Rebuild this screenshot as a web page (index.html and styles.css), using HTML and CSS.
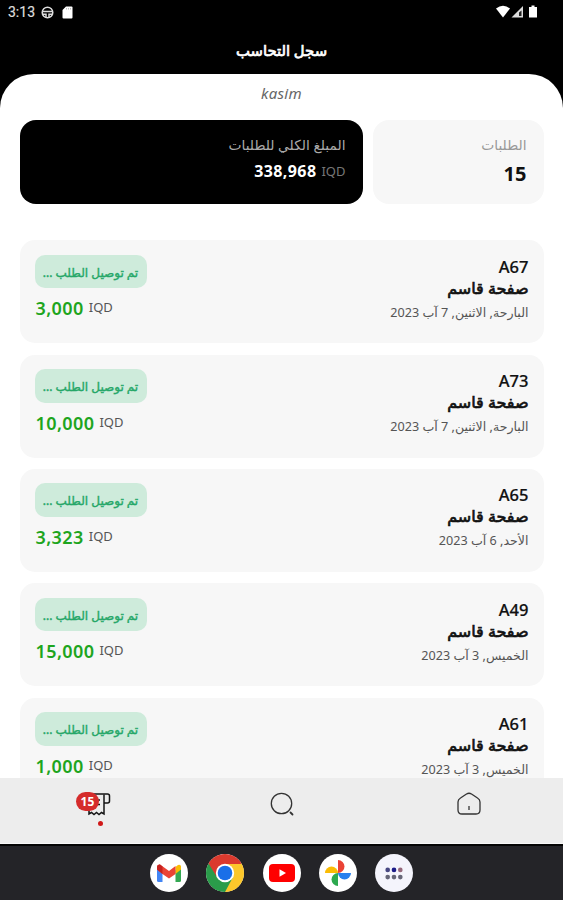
FILE: index.html
```html
<!DOCTYPE html>
<html lang="ar" dir="rtl">
<head>
  <meta charset="UTF-8" />
  <meta name="viewport" content="width=device-width, initial-scale=1.0"/>
  <title>سجل التحاسب</title>
  <link rel="stylesheet" href="styles.css">
</head>
<body>
  <div class="status" dir="ltr">
    <span class="clock">3:13</span>
    <svg width="13" height="13" viewBox="0 0 13 13" fill="none" stroke="#ddd" stroke-width="1.5">
      <circle cx="6.5" cy="6.5" r="5.3"/>
      <path d="M1.5 5.500h10M1.500 8.300h3.500v3M11.500 8.300H8v3"/>
    </svg>
    <svg class="sd" width="11" height="13" viewBox="0 0 11 13">
      <path d="M4 .5h5.5q1 0 1 1v10q0 1-1 1h-8q-1 0-1-1V4z" fill="#fff"/>
      <path d="M4.5 2v1.5M6.5 2v1.5M8.5 2v1.5" stroke="#aaa" stroke-width=".8"/>
    </svg>
    <svg class="signals" width="42" height="14" viewBox="0 0 42 14">
      <path d="M0 3.5Q7-2 14 3.5L7 12.5z" fill="#fff"/>
      <path d="M15.5 12.5L27 1v11.5z" fill="#ddd"/>
      <path d="M23 7.5l2.5-2v5.5H23z" fill="#222"/>
      <path d="M33 2h2.5V.5h3V2H41v10.500h-8z" fill="#fff"/>
    </svg>
  </div>
  <h1 class="title">سجل التحاسب</h1>

  <main class="sheet">
    <p class="user">kasim</p>

    <div class="summary">
      <div class="box orders">
        <div class="label">الطلبات</div>
        <div class="count">15</div>
      </div>
      <div class="box total">
        <div class="label">المبلغ الكلي للطلبات</div>
        <div class="sum"><small>IQD</small><b>338,968</b></div>
      </div>
    </div>

    <div class="list">
      <div class="card">
        <div class="info">
          <div class="code">A67</div>
          <div class="page">صفحة قاسم</div>
          <div class="date">البارحة, الاثنين, 7 آب 2023</div>
        </div>
        <div class="state">
          <div class="tag">تم توصيل الطلب ...</div>
          <div class="price" dir="ltr"><b>3,000</b><small>IQD</small></div>
        </div>
      </div>
      <div class="card">
        <div class="info">
          <div class="code">A73</div>
          <div class="page">صفحة قاسم</div>
          <div class="date">البارحة, الاثنين, 7 آب 2023</div>
        </div>
        <div class="state">
          <div class="tag">تم توصيل الطلب ...</div>
          <div class="price" dir="ltr"><b>10,000</b><small>IQD</small></div>
        </div>
      </div>
      <div class="card">
        <div class="info">
          <div class="code">A65</div>
          <div class="page">صفحة قاسم</div>
          <div class="date">الأحد, 6 آب 2023</div>
        </div>
        <div class="state">
          <div class="tag">تم توصيل الطلب ...</div>
          <div class="price" dir="ltr"><b>3,323</b><small>IQD</small></div>
        </div>
      </div>
      <div class="card">
        <div class="info">
          <div class="code">A49</div>
          <div class="page">صفحة قاسم</div>
          <div class="date">الخميس, 3 آب 2023</div>
        </div>
        <div class="state">
          <div class="tag">تم توصيل الطلب ...</div>
          <div class="price" dir="ltr"><b>15,000</b><small>IQD</small></div>
        </div>
      </div>
      <div class="card">
        <div class="info">
          <div class="code">A61</div>
          <div class="page">صفحة قاسم</div>
          <div class="date">الخميس, 3 آب 2023</div>
        </div>
        <div class="state">
          <div class="tag">تم توصيل الطلب ...</div>
          <div class="price" dir="ltr"><b>1,000</b><small>IQD</small></div>
        </div>
      </div>
    </div>
  </main>

  <nav class="tabs">
    <a class="tab">
      <svg width="24" height="24" viewBox="0 0 24 24" fill="none" stroke="#333" stroke-width="1.3">
        <path d="M9.500 2Q12 .5 14.500 2l6 4Q23 7.500 23 10v8q0 4-4 4H5q-4 0-4-4v-8q0-2.500 2.500-4z"/>
        <path d="M12 14v4"/>
      </svg>
    </a>
    <a class="tab">
      <svg width="24" height="24" viewBox="0 0 24 24" fill="none" stroke="#333" stroke-width="1.3" stroke-linecap="round">
        <circle cx="11.5" cy="11.5" r="10.2"/>
        <path d="M20.500 20.500l2 2" stroke-width="1.8"/>
      </svg>
    </a>
    <a class="tab active">
      <svg width="24" height="24" viewBox="0 0 24 24" fill="none" stroke="#151515" stroke-width="1.5">
        <path d="M2 2h18.500q2 0 2 2v5q0 2-2 2H17"/>
        <path d="M17 2.500V22l-2.500-1.500-2.500 2-2.500-2-2.500 2-2.500-2-2.500 1.500V2"/>
        <path d="M8 8h5M8 12.500h5"/>
      </svg>
      <span class="badge">15</span>
      <span class="dot"></span>
    </a>
  </nav>

  <footer class="dock" dir="ltr">
    <span class="app">
      <svg width="26" height="20" viewBox="0 0 26 20">
        <path d="M1 3v14.500q0 1.500 1.500 1.500H6.500V7z" fill="#4285f4"/>
        <path d="M25 3v14.500q0 1.500-1.500 1.500H19.500V7z" fill="#34a853"/>
        <path d="M19.500 4L22 2q3-1 3 2v2.500L19.500 11z" fill="#fbbc04"/>
        <path d="M1 6.500V4q0-3 3-2.500l9 6.500 6.500-5v8L13 15.500 6.500 11z" fill="#ea4335"/>
        <path d="M1 6.500V4q0-3 3-2.500l2.500 2V11z" fill="#c5221f"/>
      </svg>
    </span>
    <span class="app">
      <svg width="38" height="38" viewBox="0 0 38 38">
        <path d="M19 19L2.550 9.500A19 19 0 0 1 35.450 9.500z" fill="#db3a2e"/>
        <path d="M19 19L35.450 9.500A19 19 0 0 1 19 38z" fill="#fcc72b"/>
        <path d="M19 19L19 38A19 19 0 0 1 2.550 9.500z" fill="#2a9c4a"/>
        <path d="M19 10h16.700L26.800 23.500z" fill="#fcc72b"/>
        <path d="M26.800 23.500L19 38l-5-12z" fill="#2a9c4a"/>
        <path d="M2.550 9.500L11.200 23.500 19 10z" fill="#db3a2e"/>
        <circle cx="19" cy="19" r="9.2" fill="#fff"/>
        <circle cx="19" cy="19" r="7.3" fill="#1a6fe8"/>
      </svg>
    </span>
    <span class="app">
      <svg width="26" height="18" viewBox="0 0 26 18">
        <rect width="26" height="18" rx="4" fill="#f00"/>
        <path d="M10.500 5.200v7.600L17 9z" fill="#fff"/>
      </svg>
    </span>
    <span class="app">
      <svg width="28" height="28" viewBox="0 0 28 28">
        <path d="M14 1a6.500 6.500 0 0 1 0 13z" fill="#ea4335"/>
        <path d="M27 14a6.500 6.500 0 0 1-13 0z" fill="#2880ee"/>
        <path d="M14 27a6.500 6.500 0 0 1 0-13z" fill="#2da94f"/>
        <path d="M1 14a6.500 6.500 0 0 1 13 0z" fill="#fbbc04"/>
      </svg>
    </span>
    <span class="app more">
      <svg width="18" height="13" viewBox="0 0 20 14">
        <circle cx="3" cy="3" r="2.6" fill="#474782"/>
        <circle cx="10" cy="3" r="2.6" fill="#1c1c88"/>
        <circle cx="17" cy="3" r="2.6" fill="#95687c"/>
        <circle cx="3" cy="11" r="2.6" fill="#666678"/>
        <circle cx="10" cy="11" r="2.6" fill="#666678"/>
        <circle cx="17" cy="11" r="2.6" fill="#666678"/>
      </svg>
    </span>
  </footer>
</body>
</html>
```
FILE: styles.css
```css
* {
  box-sizing: border-box;
}

body {
  margin: 0;
  height: 900px;
  display: flex;
  flex-direction: column;
  overflow: hidden;
  background: #000;
  font-family: "Noto Sans", "DejaVu Sans", sans-serif;
  color: #111;
}

svg {
  display: block;
}

.status {
  height: 24px;
  padding: 0 25px 0 8px;
  display: flex;
  align-items: center;
  flex: none;
}

.clock {
  width: 33px;
  font: 14px/24px Roboto, sans-serif;
  -webkit-text-stroke: 0.2px;
  color: #ddd;
}

.sd {
  margin-left: 8px;
}

.signals {
  margin-left: auto;
}

.title {
  margin: 0;
  height: 50.4px;
  flex: none;
  text-align: center;
  font-size: 14.8px;
  font-weight: normal;
  -webkit-text-stroke: 0.7px;
  line-height: 52px;
  color: #fff;
}

.sheet {
  flex: 1;
  min-height: 0;
  overflow: hidden;
  padding: 0 19.5px;
  background: #fff;
  border-radius: 34px 34px 0 0;
}

.user {
  margin: 0;
  height: 46px;
  text-align: center;
  font-size: 15px;
  font-style: italic;
  letter-spacing: 0.3px;
  line-height: 38px;
  color: #666;
}

.summary {
  display: flex;
  gap: 10px;
  height: 84px;
  margin-bottom: 36px;
}

.box {
  padding: 12px 17px;
  border-radius: 16px;
}

.orders {
  width: 171px;
  background: #f7f7f7;
}

.total {
  flex: 1;
  background: #000;
}

.label {
  font-size: 13.8px;
  line-height: 25px;
  color: #999;
}

.total .label {
  color: #aaa;
}

.count {
  font-size: 20px;
  font-weight: bold;
  line-height: 33px;
}

.sum {
  display: flex;
  gap: 5px;
  line-height: 29px;
  font-size: 16px;
  letter-spacing: 0.4px;
  color: #fff;
}

.sum small {
  font-size: 13px;
  letter-spacing: 0;
  color: #777;
}

.list {
  display: flex;
  flex-direction: column;
  gap: 11.3px;
}

.card {
  display: flex;
  justify-content: space-between;
  height: 103px;
  flex: none;
  padding: 14.5px 15px;
  background: #f7f7f7;
  border-radius: 15px;
}

.code {
  font-size: 16.5px;
  font-weight: 500;
  -webkit-text-stroke: 0.2px;
  line-height: 23px;
}

.page {
  font-size: 16px;
  -webkit-text-stroke: 0.7px;
  line-height: 20px;
}

.date {
  font-size: 12.6px;
  line-height: 29px;
  color: #555;
}

.tag {
  width: 112px;
  height: 33.5px;
  border-radius: 10px;
  background: #ceebdb;
  color: #25a768;
  text-align: center;
  font-size: 12px;
  -webkit-text-stroke: 0.4px;
  line-height: 35px;
  white-space: nowrap;
}

.price {
  display: flex;
  gap: 5px;
  line-height: 40px;
  padding-left: 1px;
}

.price b {
  font-size: 18px;
  font-weight: 600;
  letter-spacing: 0.4px;
  color: #1ea51e;
}

.price small {
  font-size: 13px;
  line-height: 38px;
  color: #555;
}

.tabs {
  height: 66px;
  flex: none;
  display: flex;
  background: #ededed;
  border-bottom: 1px solid #f8f8f8;
}

.tab {
  position: relative;
  flex: 1;
  display: flex;
  justify-content: center;
  padding-top: 14px;
}

.active {
  left: 5px;
}

.badge {
  position: absolute;
  top: 14px;
  left: 71px;
  width: 23px;
  height: 19px;
  border-radius: 10px;
  background: #d52b2b;
  color: #fff;
  text-align: center;
  font-size: 12px;
  font-weight: bold;
  line-height: 19px;
}

.dot {
  position: absolute;
  top: 43px;
  left: 93px;
  width: 5px;
  height: 5px;
  border-radius: 50%;
  background: #d01818;
}

.dock {
  height: 56px;
  flex: none;
  display: flex;
  justify-content: center;
  align-items: center;
  gap: 18.2px;
  background: #242428;
  border-top: 2px solid #050505;
}

.app {
  width: 38px;
  height: 38px;
  display: flex;
  justify-content: center;
  align-items: center;
  border-radius: 50%;
  background: #fff;
}

.more {
  background: #f4f4fc;
}
```
